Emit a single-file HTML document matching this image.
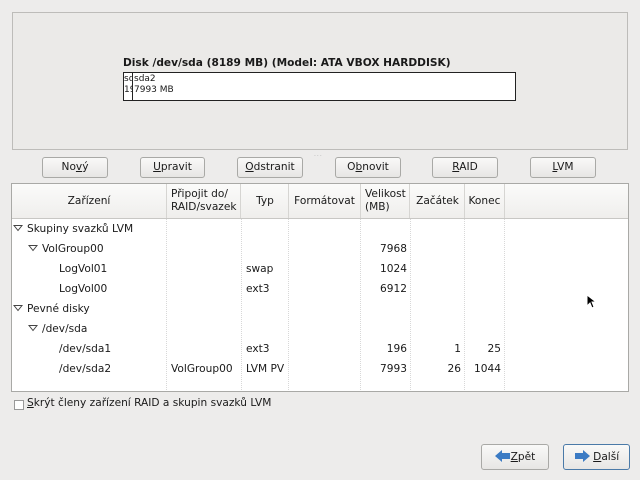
<!DOCTYPE html><html><head><style>
body{margin:0;width:640px;height:480px;background:#edeceb;font-family:"DejaVu Sans","Liberation Sans",sans-serif;font-size:10.6px;color:#1a1a1a;position:relative;overflow:hidden}
.a{position:absolute}
.btn{position:absolute;top:157px;height:19px;border:1px solid #a9a9a6;border-radius:3px;background:linear-gradient(#f9f9f8,#e7e6e4);text-align:center;line-height:19px;font-size:10.6px}
.hd{position:absolute;top:184px;height:34px;display:flex;align-items:center;justify-content:center;font-size:10.6px;line-height:13px;border-right:1px solid #d6d5d2}
.c{position:absolute;font-size:10.6px;line-height:20px;white-space:nowrap}
.r{text-align:right}
.v{position:absolute;top:219px;height:171px;border-left:1px dotted #d8d8d8}
.tri{display:inline-block;width:10px;height:8px;margin-right:4px;vertical-align:0}
u{text-decoration:underline}
</style></head><body>
<div class="a" style="left:12px;top:12px;width:614px;height:136px;border:1px solid #bdbcb9;background:#ebeae8"></div>
<div class="a" style="left:123px;top:57px;font-weight:bold;font-size:10.6px">Disk /dev/sda (8189 MB) (Model: ATA VBOX HARDDISK)</div>
<div class="a" style="left:123px;top:72px;width:391px;height:27px;border:1px solid #222;background:#fff;font-size:9px;line-height:11px;overflow:hidden">
<div class="a" style="left:0;top:1px;width:8px;overflow:hidden">sda1<br>196</div>
<div class="a" style="left:8px;top:0;height:27px;border-left:1px solid #222"></div>
<div class="a" style="left:10px;top:1px">sda2<br>7993 MB</div></div>
<div class="a" style="left:314px;top:151px;font-size:6px;color:#aaa;letter-spacing:1px">...</div>
<div class="btn" style="left:42px;width:64px">No<u>v</u>ý</div>
<div class="btn" style="left:140px;width:63px"><u>U</u>pravit</div>
<div class="btn" style="left:237px;width:64px"><u>O</u>dstranit</div>
<div class="btn" style="left:335px;width:64px">O<u>b</u>novit</div>
<div class="btn" style="left:432px;width:64px"><u>R</u>AID</div>
<div class="btn" style="left:530px;width:64px"><u>L</u>VM</div>
<div class="a" style="left:11px;top:183px;width:616px;height:207px;border:1px solid #a9a9a6;background:#fff"></div>
<div class="a" style="left:12px;top:184px;width:616px;height:34px;background:linear-gradient(#fbfbfa,#efeeec);border-bottom:1px solid #c8c7c4"></div>
<div class="hd" style="left:12px;width:154px">Zařízení</div>
<div class="hd" style="left:167px;width:74px;justify-content:flex-start;padding-left:4px;box-sizing:border-box">Připojit do/<br>RAID/svazek</div>
<div class="hd" style="left:242px;width:46px">Typ</div>
<div class="hd" style="left:289px;width:71px">Formátovat</div>
<div class="hd" style="left:361px;width:49px;justify-content:flex-start;padding-left:4px;box-sizing:border-box">Velikost<br>(MB)</div>
<div class="hd" style="left:411px;width:53px">Začátek</div>
<div class="hd" style="left:465px;width:39px">Konec</div>
<div class="v" style="left:166px"></div><div class="v" style="left:241px"></div><div class="v" style="left:288px"></div><div class="v" style="left:360px"></div><div class="v" style="left:410px"></div><div class="v" style="left:464px"></div><div class="v" style="left:504px"></div>
<div class="c" style="left:13px;top:219px"><svg class="tri"><path d="M1 1.5 H9 L5 6.5 Z" fill="#fff" stroke="#444"/></svg>Skupiny svazků LVM</div>
<div class="c" style="left:28px;top:239px"><svg class="tri"><path d="M1 1.5 H9 L5 6.5 Z" fill="#fff" stroke="#444"/></svg>VolGroup00</div>
<div class="c" style="left:59px;top:259px">LogVol01</div>
<div class="c" style="left:59px;top:279px">LogVol00</div>
<div class="c" style="left:13px;top:299px"><svg class="tri"><path d="M1 1.5 H9 L5 6.5 Z" fill="#fff" stroke="#444"/></svg>Pevné disky</div>
<div class="c" style="left:28px;top:319px"><svg class="tri"><path d="M1 1.5 H9 L5 6.5 Z" fill="#fff" stroke="#444"/></svg>/dev/sda</div>
<div class="c" style="left:59px;top:339px">/dev/sda1</div>
<div class="c" style="left:59px;top:359px">/dev/sda2</div>
<div class="c" style="left:171px;top:359px">VolGroup00</div>
<div class="c" style="left:246px;top:259px">swap</div>
<div class="c" style="left:246px;top:279px">ext3</div>
<div class="c" style="left:246px;top:339px">ext3</div>
<div class="c" style="left:246px;top:359px">LVM PV</div>
<div class="c r" style="left:360px;width:47px;top:239px">7968</div>
<div class="c r" style="left:360px;width:47px;top:259px">1024</div>
<div class="c r" style="left:360px;width:47px;top:279px">6912</div>
<div class="c r" style="left:360px;width:47px;top:339px">196</div>
<div class="c r" style="left:360px;width:47px;top:359px">7993</div>
<div class="c r" style="left:410px;width:51px;top:339px">1</div>
<div class="c r" style="left:410px;width:51px;top:359px">26</div>
<div class="c r" style="left:464px;width:37px;top:339px">25</div>
<div class="c r" style="left:464px;width:37px;top:359px">1044</div>
<svg class="a" style="left:586px;top:294px" width="10" height="15"><path d="M1 1 L1 12 L4 9 L6 14 L8 13 L6 8 L10 8 Z" fill="#000" stroke="#fff" stroke-width="1"/></svg>
<div class="a" style="left:14px;top:400px;width:8px;height:8px;border:1px solid #999;background:#fff"></div>
<div class="a" style="left:27px;top:397px"><u>S</u>krýt členy zařízení RAID a skupin svazků LVM</div>
<div class="btn" style="left:481px;top:444px;width:66px;height:24px;line-height:24px"><svg width="16" height="12" style="vertical-align:-2px"><path d="M0 6 L7 0 V3 H15 V9 H7 V12 Z" fill="#3b7bc4"/></svg><u>Z</u>pět</div>
<div class="btn" style="left:563px;top:444px;width:65px;height:24px;line-height:24px;border-color:#4a7aa8"><svg width="16" height="12" style="vertical-align:-2px"><path d="M16 6 L9 0 V3 H1 V9 H9 V12 Z" fill="#3b7bc4"/></svg> <u>D</u>alší</div>
</body></html>
